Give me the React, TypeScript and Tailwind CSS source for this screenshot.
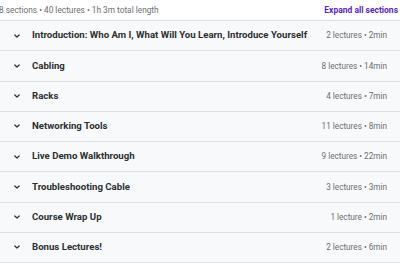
import React from "react";

const sections = [
  { title: "Introduction: Who Am I, What Will You Learn, Introduce Yourself", meta: "2 lectures • 2min" },
  { title: "Cabling", meta: "8 lectures • 14min" },
  { title: "Racks", meta: "4 lectures • 7min" },
  { title: "Networking Tools", meta: "11 lectures • 8min" },
  { title: "Live Demo Walkthrough", meta: "9 lectures • 22min" },
  { title: "Troubleshooting Cable", meta: "3 lectures • 3min" },
  { title: "Course Wrap Up", meta: "1 lecture • 2min" },
  { title: "Bonus Lectures!", meta: "2 lectures • 6min" },
];

function Chevron() {
  return (
    <svg width="8" height="8" viewBox="0 0 8 8" className="shrink-0">
      <path d="M1.8 3 L4 5 L6.2 3" fill="none" stroke="#2d2f31" strokeWidth="1.2" strokeLinecap="round" strokeLinejoin="round" />
    </svg>
  );
}

export default function App() {
  return (
    <div className="w-[400px] h-[264px] overflow-hidden bg-white" style={{ fontFamily: "Roboto, 'Noto Sans', sans-serif" }}>
      <div className="h-[20px] flex items-center justify-between">
        <span className="ml-[-1px] text-[8.3px] text-[#6a6f73]">8 sections • 40 lectures • 1h 3m total length</span>
        <span className="mr-[2px] text-[8.5px] font-bold text-[#5624d0]">Expand all sections</span>
      </div>
      <div className="border-t border-[#dde1e4]">
        {sections.map((s) => (
          <div key={s.title} className="h-[30.25px] flex items-center bg-[#f7f9fa] border-b border-[#dde1e4] pl-[13px] pr-[13px]">
            <Chevron />
            <span className="ml-[11px] flex-1 text-[9.65px] font-bold text-[#2d2f31] whitespace-nowrap">{s.title}</span>
            <span className="text-[8.2px] text-[#6a6f73] whitespace-nowrap">{s.meta}</span>
          </div>
        ))}
      </div>
    </div>
  );
}
